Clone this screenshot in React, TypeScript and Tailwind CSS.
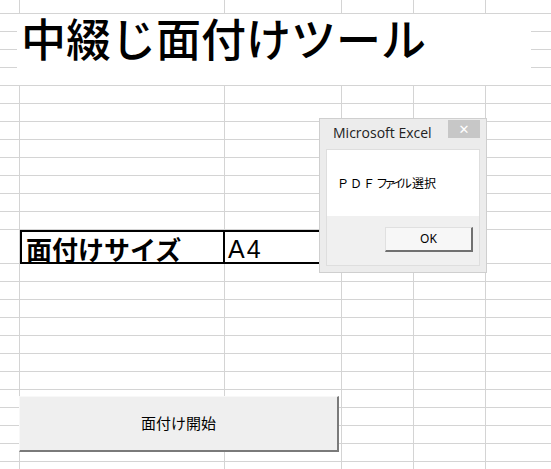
import React from "react";

const jp = "font-['Noto_Sans_CJK_JP',sans-serif]";

// column widths incl. right gridline
const cols = [20, 205, 117, 72, 72, 100];
const rows = [14, 18, 18, 18, 18, 18, 18, 18, 18, 18, 18, 18, 18, 34, 18, 18, 18, 18, 18, 18, 18, 18, 18, 18, 18, 18];
const TABLE_ROW = 13;

function Cell({ w, row, col }: { w: number; row: number; col: number }) {
  if (row === TABLE_ROW && col === 1) {
    return (
      <div
        style={{ width: w }}
        className={`shrink-0 h-full border-2 border-black flex items-center pl-[4px] pt-[3px] text-[26px] font-bold text-black leading-none ${jp}`}
      >
        面付けサイズ
      </div>
    );
  }
  if (row === TABLE_ROW && col === 2) {
    return (
      <div
        style={{ width: w }}
        className="shrink-0 h-full border-2 border-l-0 border-black flex items-center pl-[3px] pt-[4px] text-[25px] tracking-[2px] text-black leading-none font-['Liberation_Sans',sans-serif]"
      >
        A4
      </div>
    );
  }
  return <div style={{ width: w }} className="shrink-0 h-full border-r border-b border-[#d4d4d4]" />;
}

export default function App() {
  return (
    <div className="relative w-[551px] h-[469px] overflow-hidden bg-white">
      {/* sheet */}
      <div className="flex flex-col">
        {rows.map((h, r) => (
          <div key={r} style={{ height: h }} className="flex shrink-0">
            {cols.map((w, c) => (
              <Cell key={c} w={w} row={r} col={c} />
            ))}
          </div>
        ))}
      </div>

      {/* title text box */}
      <div className="absolute left-[17px] top-[14px] w-[514px] h-[71px] bg-white">
        <p className={`pl-[4px] pt-[1px] text-[45px] leading-[45px] font-medium text-black ${jp}`}>
          中綴じ面付けツール
        </p>
      </div>

      {/* form button */}
      <button
        className={`absolute left-[19px] top-[396px] w-[320px] h-[56px] bg-[#efefef] border-t border-l border-[#f8f8f8] border-r-2 border-b-2 border-r-[#7a7a7a] border-b-[#7a7a7a] text-[15px] text-black ${jp}`}
      >
        面付け開始
      </button>

      {/* msgbox */}
      <div className="absolute left-[319px] top-[118px] w-[168px] h-[155px] bg-[#ececec] border border-[#cfcfcf] flex flex-col px-[6px] pb-[6px]">
        <div className="h-[30px] flex items-start justify-between">
          <span className="pl-[7px] pt-[5px] text-[14px] leading-[18px] text-[#222] font-['Open_Sans','Noto_Sans',sans-serif]">
            Microsoft Excel
          </span>
          <div className="mt-[1px] w-[32px] h-[18px] bg-[#c7c7c7] flex items-center justify-center text-white text-[13px] leading-none font-['DejaVu_Sans',sans-serif]">
            ✕
          </div>
        </div>
        <div className="flex-1 flex flex-col border border-[#dedede]">
          <div className="h-[66px] bg-white flex items-center pl-[10px]">
            <span className={`text-[12px] leading-none text-black ${jp}`}>
              <span className="tracking-[1px]">ＰＤＦ</span>
              <span className="tracking-[-4px]">ファイル</span>
              <span className="pl-[4px]">選択</span>
            </span>
          </div>
          <div className="flex-1 bg-[#f0f0f0] flex justify-end items-start pt-[11px] pr-[6px]">
            <div className="w-[88px] h-[25px] bg-[#f7f7f7] border-t border-l border-[#e0e0e0] border-r-2 border-b-2 border-r-[#707070] border-b-[#707070] flex items-center justify-center text-[12px] text-black font-['Noto_Sans',sans-serif]">
              OK
            </div>
          </div>
        </div>
      </div>
    </div>
  );
}
